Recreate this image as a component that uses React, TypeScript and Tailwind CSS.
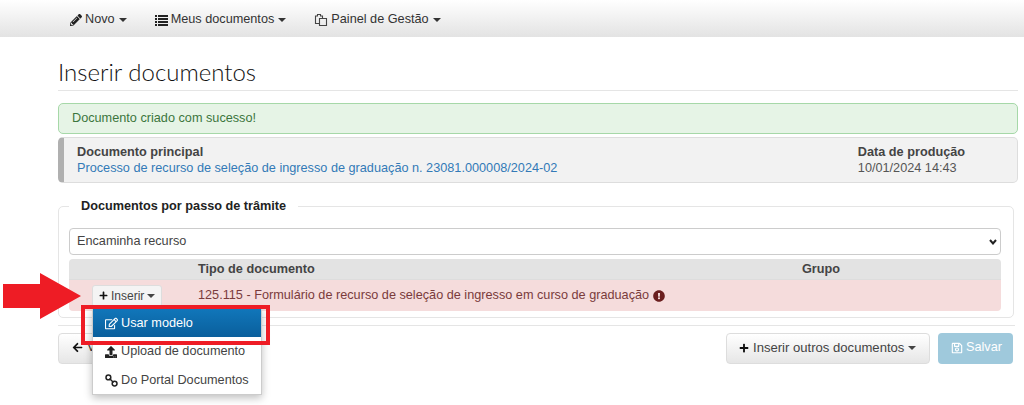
import { FC, ReactNode } from 'react'
import { FaPencilAlt, FaPlus, FaRegEdit, FaUpload, FaArrowLeft, FaRegSave, FaExclamationCircle } from 'react-icons/fa'

const Caret = () => (
    <span className="inline-block w-0 h-0 border-x-4 border-x-transparent border-t-4 border-t-current" />
)

const ListIcon = () => (
    <svg width="13" height="12" viewBox="0 0 13 12" fill="#222">
        <path d="M0 1h2v2H0z M3 1h10v2H3z M0 4h2v2H0z M3 4h10v2H3z M0 7h2v2H0z M3 7h10v2H3z M0 10h2v2H0z M3 10h10v2H3z" />
    </svg>
)

const PasteIcon = () => (
    <svg width="14" height="14" viewBox="0 0 14 14" fill="none" stroke="#444" strokeWidth="1.1">
        <path d="M5 10.5 H1.5 V3 H3.5 V1.5 H6.5 V3 H8.5 V5" />
        <path d="M5.5 5.5 H12.5 V12.5 H5.5 Z" />
    </svg>
)

const ChainIcon = () => (
    <svg width="13" height="13" viewBox="0 0 13 13" fill="none" stroke="#222" strokeWidth="1.5">
        <circle cx="3.4" cy="3.4" r="2.4" />
        <circle cx="9.6" cy="9.6" r="2.4" />
        <path d="M4.5 4.5 L8.5 8.5" />
    </svg>
)

const NavItem: FC<{ icon: ReactNode; label: string }> = ({ icon, label }) => (
    <div className="flex items-center gap-[3px] text-[#333]">
        {icon}
        <span className="mr-px">{label}</span>
        <Caret />
    </div>
)

export default function App() {
    return (
        <div className="relative w-[1024px] h-[405px] overflow-hidden bg-white text-[12.7px] text-[#333] font-['Liberation_Sans',sans-serif]">
            <nav className="flex items-center h-[37px] pt-[3px] pl-[70px] gap-[28px] bg-gradient-to-b from-white to-[#e3e3e3]">
                <NavItem icon={<FaPencilAlt className="text-[12px] text-[#222]" />} label="Novo" />
                <NavItem icon={<ListIcon />} label="Meus documentos" />
                <NavItem icon={<PasteIcon />} label="Painel de Gestão" />
            </nav>

            <main className="pl-[58px] pr-[6px]">
                <h1 className="mt-[21px] h-[33px] border-b border-[#e5e5e5] font-['Lato',sans-serif] font-light text-[24px] leading-[28px] text-[#111]">
                    Inserir documentos
                </h1>

                <div className="mt-[12px] h-[31px] flex items-center pl-[13px] rounded-[5px] border border-[#a6d8a8] bg-[#e6f4e6] text-[#3c763d]">
                    Documento criado com sucesso!
                </div>

                <div className="mt-[3px] h-[46px] pt-[2px] flex justify-between items-center pl-[13px] pr-[52px] rounded-[5px] border border-[#ddd] border-l-[6px] border-l-[#b0b0b0] bg-[#f2f2f2]">
                    <div>
                        <div className="font-bold text-[#444] leading-[15px]">Documento principal</div>
                        <a className="text-[#337ab7] leading-[17px] block">
                            Processo de recurso de seleção de ingresso de graduação n. 23081.000008/2024-02
                        </a>
                    </div>
                    <div>
                        <div className="font-bold text-[#444] leading-[15px]">Data de produção</div>
                        <div className="text-[#555] leading-[17px]">10/01/2024 14:43</div>
                    </div>
                </div>

                <fieldset className="relative mt-[23px] mr-[4px] h-[112px] rounded-[5px] border border-[#e5e5e5] pl-[10px] pr-[12px] pt-[21px]">
                    <div className="absolute left-[10px] top-[-8px] bg-white px-[12px] font-bold text-[#222] leading-[15px]">
                        Documentos por passo de trâmite
                    </div>
                    <div className="flex items-center justify-between h-[27px] rounded-[4px] border border-[#ccc] pl-[7px] pr-[3px] text-[#444]">
                        <span>Encaminha recurso</span>
                        <svg width="8" height="6" viewBox="0 0 8 6">
                            <path d="M1 1 L4 4.5 L7 1" fill="none" stroke="#222" strokeWidth="2" />
                        </svg>
                    </div>
                    <div className="mt-[4px] rounded-[4px] overflow-hidden">
                        <div className="flex items-center h-[21px] pt-px bg-[#e3e3e3] border-b border-[#ddd] font-bold text-[#444]">
                            <span className="ml-[129px] w-[604px]">Tipo de documento</span>
                            <span>Grupo</span>
                        </div>
                        <div className="flex items-center h-[31px] bg-[#f5dcdc] text-[#7a3b3b]">
                            <div className="ml-[23px] w-[106px]">
                                <div className="inline-flex items-center h-[22px] w-[70px] pl-[6px] gap-[3px] rounded-[3px] border border-[#ddd] bg-[#f4f4f4] text-[12px] text-[#444]">
                                    <FaPlus className="text-[9px] text-[#111]" />
                                    <span>Inserir</span>
                                    <Caret />
                                </div>
                            </div>
                            <span>125.115 - Formulário de recurso de seleção de ingresso em curso de graduação</span>
                            <FaExclamationCircle className="ml-[4px] text-[12px] text-[#6b1f1f]" />
                        </div>
                    </div>
                </fieldset>

                <div className="mt-[7px] mr-[3px] border-t border-[#e5e5e5] pt-[7px] flex items-center gap-[8px]">
                    <div className="flex items-center h-[31px] pb-[2px] px-[13px] rounded-[4px] border border-[#ddd] bg-gradient-to-b from-white to-[#e6e6e6] gap-[4px]">
                        <FaArrowLeft className="text-[11px] text-[#111]" />
                        <span>Voltar</span>
                    </div>
                    <div className="ml-auto flex items-center h-[31px] pb-[2px] w-[204px] pl-[12px] gap-[4px] rounded-[4px] border border-[#ddd] bg-gradient-to-b from-white to-[#e6e6e6] text-[13.1px] text-[#444]">
                        <FaPlus className="text-[10px] text-[#111]" />
                        <span>Inserir outros documentos</span>
                        <Caret />
                    </div>
                    <div className="flex items-center h-[31px] pb-[2px] w-[75px] pl-[13px] gap-[3px] mr-[2px] rounded-[4px] bg-[#9fc9dc] text-[12.7px] text-white">
                        <FaRegSave className="text-[12px]" />
                        <span>Salvar</span>
                    </div>
                </div>
            </main>

            {/* dropdown aberto */}
            <div className="absolute left-[92px] top-[308px] w-[170px] bg-white border border-t-0 border-[#ccc] shadow-[0_3px_8px_rgba(0,0,0,0.25)] text-[#444]">
                <div className="flex items-center gap-[3px] h-[29px] pt-[2px] pl-[12px] bg-gradient-to-b from-[#1177bb] to-[#0a5f9c] text-white">
                    <FaRegEdit className="text-[13px]" />
                    <span>Usar modelo</span>
                </div>
                <div className="flex items-center gap-[4px] h-[28px] pt-px pl-[12px]">
                    <FaUpload className="text-[12px] text-[#222]" />
                    <span>Upload de documento</span>
                </div>
                <div className="flex items-center gap-[3px] h-[29px] pt-[2px] pl-[12px]">
                    <ChainIcon />
                    <span>Do Portal Documentos</span>
                </div>
            </div>

            {/* marcações vermelhas */}
            <div className="absolute left-[81px] top-[305px] w-[189px] h-[40px] border-[4px] border-[#ee1c25]" />
            <svg className="absolute left-0 top-[270px]" width="84" height="52" viewBox="0 0 84 52">
                <path d="M3 14 H40 V3 L81 26 L40 49 V38 H3 Z" fill="#ee1c25" />
            </svg>
        </div>
    )
}
